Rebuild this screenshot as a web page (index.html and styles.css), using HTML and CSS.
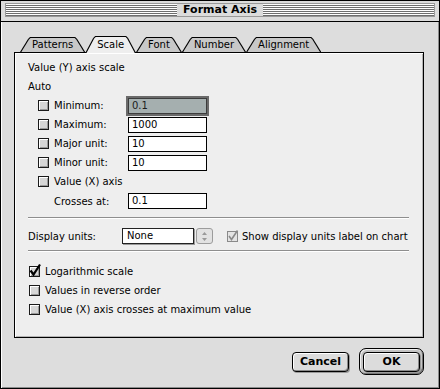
FILE: index.html
```html
<!DOCTYPE html>
<html lang="en">

<head>
  <meta charset="UTF-8">
  <title>Format Axis</title>
  <link rel="stylesheet" href="styles.css">
</head>

<body>
  <div class="window">
    <!-- title bar -->
    <div class="titlebar">
      <div class="stripes"><span class="title">Format Axis</span></div>
    </div>

    <div class="body">
      <!-- tabs -->
      <div class="tabs">
        <div class="tab">Patterns</div>
        <div class="tab active">Scale</div>
        <div class="tab">Font</div>
        <div class="tab">Number</div>
        <div class="tab">Alignment</div>
      </div>

      <div class="panel">
        <div class="row">Value (Y) axis scale</div>
        <div class="row">Auto</div>

        <div class="row field-row">
          <span class="check"><span class="box"></span>Minimum:</span>
          <span class="input focus">0.1</span>
        </div>
        <div class="row field-row">
          <span class="check"><span class="box"></span>Maximum:</span>
          <span class="input">1000</span>
        </div>
        <div class="row field-row">
          <span class="check"><span class="box"></span>Major unit:</span>
          <span class="input">10</span>
        </div>
        <div class="row field-row">
          <span class="check"><span class="box"></span>Minor unit:</span>
          <span class="input">10</span>
        </div>
        <div class="row field-row">
          <span class="check"><span class="box"></span>Value (X) axis</span>
        </div>
        <div class="row field-row crosses">
          <span class="label">Crosses at:</span>
          <span class="input">0.1</span>
        </div>

        <div class="sep"></div>

        <div class="units-row">
          <span class="units-label">Display units:</span>
          <span class="select">None</span>
          <span class="stepper">
            <svg width="7" height="11" viewBox="0 0 7 11"><path d="M3.5 1 L6 4 H1 Z M3.5 10 L6 7 H1 Z" fill="#999"/></svg>
          </span>
          <span class="check disabled">
            <span class="box checked">
              <svg width="9" height="9" viewBox="0 0 9 9"><path d="M1 4 L3.5 7.5 L9.5 -1.5" fill="none" stroke="#8a8a8a" stroke-width="1.6"/></svg>
            </span>Show display units label on chart
          </span>
        </div>

        <div class="sep sep-low"></div>

        <div class="row opt-row first">
          <span class="check">
            <span class="box checked">
              <svg width="9" height="9" viewBox="0 0 9 9"><path d="M0.5 3.5 L3.5 7.5 L10 -2.5" fill="none" stroke="#000" stroke-width="2.2"/></svg>
            </span>Logarithmic scale
          </span>
        </div>
        <div class="row opt-row">
          <span class="check"><span class="box"></span>Values in reverse order</span>
        </div>
        <div class="row opt-row">
          <span class="check"><span class="box"></span>Value (X) axis crosses at maximum value</span>
        </div>
      </div>

      <!-- buttons -->
      <div class="buttons">
        <span class="btn">Cancel</span>
        <span class="default-ring"><span class="btn">OK</span></span>
      </div>
    </div>
  </div>
</body>

</html>
```

FILE: styles.css
```css
* {
  margin: 0;
  padding: 0;
  box-sizing: border-box;
}

body {
  font-family: "DejaVu Sans", sans-serif;
  font-size: 10px;
  color: #000;
  background: #fff;
}

/* window frame */
.window {
  width: 440px;
  height: 389px;
  border: 1px solid #000;
  background: #dddddd;
  box-shadow: inset 1px 1px #fff, inset -1px -1px #8c8c8c;
}

.titlebar {
  height: 21px;
  padding: 2px 4px 4px;
  border-bottom: 1px solid #000;
  background: #dcdcdc;
}
.stripes {
  height: 14px;
  display: flex;
  justify-content: center;
  background: repeating-linear-gradient(to bottom, #ffffff 0 1px, #6e6e6e 1px 2px);
  border: 1px solid #999;
}
.title {
  background: #dcdcdc;
  padding: 0 6px;
  font-weight: bold;
  font-size: 11px;
  line-height: 12px;
}

.body {
  padding: 14px 15px 0 13px;
}

/* tabs */
.tabs {
  display: flex;
  align-items: flex-end;
  height: 16px;
  padding-left: 6px;
  position: relative;
  z-index: 1;
}
.tab {
  position: relative;
  height: 15px;
  padding: 0 12px;
  line-height: 15px;
}
.tab::before,
.tab::after {
  content: "";
  position: absolute;
  left: 0;
  right: 0;
  top: 0;
  bottom: 0;
  z-index: -1;
}
.tab::before {
  background: #000;
  clip-path: polygon(0 100%, 8px 2px, 10px 0, calc(100% - 10px) 0, calc(100% - 8px) 2px, 100% 100%);
}
.tab::after {
  background: #c8c8c8;
  clip-path: polygon(1.3px 100%, 9px 2.6px, 10.5px 1px, calc(100% - 10.5px) 1px, calc(100% - 9px) 2.6px, calc(100% - 1.3px) 100%);
}
.tab.active {
  height: 16px;
  line-height: 17px;
}
.tab.active::before,
.tab.active::after {
  bottom: -1px;
}
.tab.active::after {
  background: #eeeeee;
}

/* panel */
.panel {
  height: 286px;
  border: 1px solid #000;
  background: #eeeeee;
  box-shadow: inset 1px 1px #fff, inset -1px -1px #b4b4b4;
  padding: 5px 14px 0 13px;
}

.row {
  height: 19px;
  display: flex;
  align-items: center;
}

.field-row {
  padding-left: 10px;
}
.field-row .check {
  width: 90px;
}
.crosses {
  height: 20px;
  padding-left: 26px;
}
.crosses .label {
  width: 74px;
}

.check {
  display: flex;
  align-items: center;
}
.box {
  width: 11px;
  height: 11px;
  margin-right: 5px;
  border: 1px solid #1a1a1a;
  background: #d6d6d6;
  box-shadow: inset 1px 1px #fff, inset -1px -1px #9a9a9a;
  flex: none;
}
.box svg {
  display: block;
  overflow: visible;
}
.check.disabled .box {
  border-color: #8a8a8a;
  background: #e4e4e4;
  box-shadow: none;
  margin-right: 4px;
}

.input {
  width: 79px;
  height: 16px;
  border: 1px solid #000;
  background: #fff;
  padding-left: 3px;
  line-height: 14px;
}
.input.focus {
  background: #a5afaf;
  border-color: #3c3c3c;
  box-shadow: 0 0 0 2px #6a6a6a;
  color: #1c1c1c;
}

.sep {
  margin-top: 6px;
  height: 2px;
  border-top: 1px solid #8e8e8e;
  border-bottom: 1px solid #fff;
}
.sep-low {
  margin-top: 6px;
}

/* display units */
.units-row {
  margin-top: 9px;
  height: 16px;
  display: flex;
  align-items: center;
}
.units-label {
  width: 94px;
}
.select {
  width: 72px;
  height: 16px;
  border: 1px solid #222;
  background: #fff;
  box-shadow: 1px 1px #9a9a9a;
  padding-left: 4px;
  line-height: 14px;
}
.stepper {
  width: 17px;
  height: 16px;
  margin-left: 2px;
  margin-right: 14px;
  border: 1px solid #9c9c9c;
  border-radius: 3px;
  background: #e2e2e2;
  display: flex;
  align-items: center;
  justify-content: center;
}

.opt-row {
  padding-left: 1px;
}
.opt-row.first {
  margin-top: 10px;
}

/* buttons */
.buttons {
  margin-top: 10px;
  height: 27px;
  display: flex;
  justify-content: flex-end;
  align-items: center;
  gap: 10px;
}
.btn {
  width: 57px;
  height: 20px;
  border: 1px solid #000;
  border-radius: 4px;
  background: #dcdcdc;
  box-shadow: inset 1px 1px #fff, inset -1px -1px #8a8a8a, 1px 1px #9a9a9a;
  font-weight: bold;
  font-size: 11px;
  line-height: 18px;
  text-align: center;
}
.default-ring {
  width: 65px;
  height: 27px;
  border: 1px solid #000;
  border-radius: 7px;
  background: #c4c4c4;
  box-shadow: inset 1px 1px #f0f0f0, inset -1px -1px #777;
  display: flex;
  align-items: center;
  justify-content: center;
}
```
